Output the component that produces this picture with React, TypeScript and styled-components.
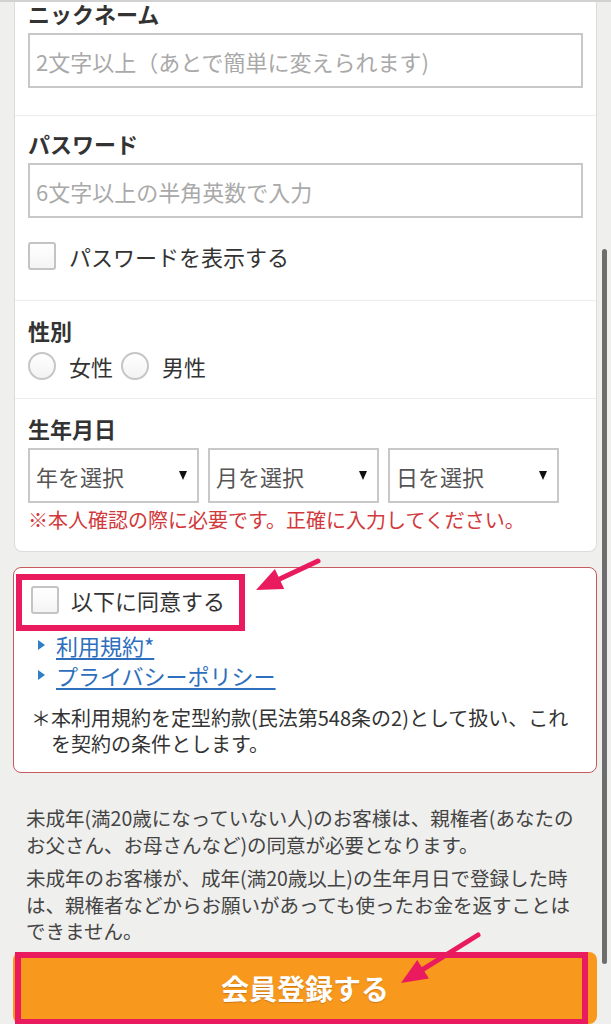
import React from "react";
import styled, { createGlobalStyle } from "styled-components";

const GlobalStyle = createGlobalStyle`
  html, body {
    margin: 0;
    padding: 0;
    overflow: hidden;
    background: #efefed;
  }
  body {
    font-family: "Noto Sans CJK JP", "Noto Sans", sans-serif;
    color: #333;
  }
  * { box-sizing: border-box; }
`;

const Page = styled.div`
  position: relative;
  width: 611px;
  height: 1024px;
  border-top: 2px solid #d2d2d2;
  overflow: hidden;
`;

const Card = styled.div`
  margin: 0 14px;
  background: #fff;
  border: 1px solid #dcdcdc;
  border-top: none;
  border-radius: 0 0 8px 8px;
`;

const Section = styled.div<{ $top: number; $bottom: number; $first?: boolean }>`
  padding: ${(p) => p.$top}px 13px ${(p) => p.$bottom}px;
  border-top: ${(p) => (p.$first ? "none" : "1px solid #ececec")};
`;

const Title = styled.div`
  font-size: 22px;
  font-weight: 700;
  line-height: 22px;
  color: #333;
  margin-bottom: 9px;
`;

const TextInput = styled.input`
  display: block;
  width: 100%;
  height: 55px;
  border: 2px solid #c8c8c8;
  border-radius: 0;
  padding: 0 6px;
  font-family: inherit;
  font-size: 22px;
  color: #333;
  background: #fff;
  outline: none;
  &::placeholder {
    color: #a9a9a9;
  }
`;

const CheckRow = styled.label<{ $mt: number }>`
  display: flex;
  align-items: center;
  gap: 13px;
  margin-top: ${(p) => p.$mt}px;
  height: 28px;
  font-size: 22px;
  line-height: 28px;
  color: #333;
`;

const CheckBox = styled.span`
  flex: none;
  width: 28px;
  height: 28px;
  border: 2px solid #c4c4c4;
  border-radius: 3px;
  background: linear-gradient(#ffffff, #f4f4f4);
`;

const RadioRow = styled.div`
  display: flex;
  align-items: center;
  margin-top: 11px;
  height: 28px;
`;

const RadioItem = styled.label`
  display: flex;
  align-items: center;
  gap: 13px;
  margin-right: 8px;
  font-size: 22px;
  line-height: 28px;
  color: #333;
`;

const RadioCircle = styled.span`
  flex: none;
  width: 28px;
  height: 28px;
  border-radius: 50%;
  border: 2px solid #c6c6c6;
  background: linear-gradient(#ffffff, #f3f3f3);
`;

const SelectRow = styled.div`
  display: flex;
  gap: 9px;
`;

const SelectBox = styled.div`
  width: 171px;
  height: 55px;
  border: 2px solid #c8c8c8;
  display: flex;
  align-items: center;
  justify-content: space-between;
  padding: 0 10px 0 6px;
  font-size: 22px;
  color: #555;
`;

const DownArrow = styled.span`
  width: 0;
  height: 0;
  border-left: 4px solid transparent;
  border-right: 4px solid transparent;
  border-top: 9px solid #111;
`;

const Notice = styled.div`
  margin-top: 4px;
  font-size: 20px;
  line-height: 26px;
  color: #d2393c;
`;

const AgreeBox = styled.div`
  position: relative;
  margin: 15px 14px 0 13px;
  background: #fff;
  border: 1.5px solid #c65a5c;
  border-radius: 8px;
  padding: 17px 16px 15px 17px;
`;

const AgreeRow = styled.label`
  display: flex;
  align-items: center;
  gap: 12px;
  height: 30px;
  font-size: 22px;
  color: #333;
`;

const LinkList = styled.ul`
  list-style: none;
  margin: 15px 0 0;
  padding: 0 0 0 7px;
`;

const LinkItem = styled.li`
  display: flex;
  align-items: center;
  gap: 11px;
  height: 30px;
  &::before {
    content: "";
    width: 0;
    height: 0;
    border-top: 5px solid transparent;
    border-bottom: 5px solid transparent;
    border-left: 7px solid #2f7fc6;
  }
`;

const Link = styled.a`
  font-size: 22px;
  line-height: 30px;
  color: #2d6fbd;
  text-decoration: underline;
  text-underline-offset: 3px;
  text-decoration-thickness: 1.5px;
`;

const Note = styled.p`
  margin: 15px 0 0;
  padding-left: 20px;
  text-indent: -20px;
  font-size: 20px;
  line-height: 26px;
  color: #333;
`;

const Info = styled.div`
  margin: 32px 14px 0 26px;
  display: flex;
  flex-direction: column;
  gap: 7px;
`;

const InfoText = styled.p`
  margin: 0;
  font-size: 19.5px;
  line-height: 26.5px;
  color: #444;
`;

const SubmitButton = styled.button`
  position: relative;
  display: block;
  width: 584px;
  height: 72px;
  margin: 7px 14px 0 13px;
  border: none;
  border-radius: 8px;
  background: #f8991e;
  color: #fff;
  font-family: inherit;
  font-size: 28px;
  font-weight: 700;
  text-shadow: 0 1px 1px rgba(120, 60, 0, 0.35);
`;

const Highlight = styled.span<{ $l: number; $t: number; $w: number; $h: number }>`
  position: absolute;
  left: ${(p) => p.$l}px;
  top: ${(p) => p.$t}px;
  width: ${(p) => p.$w}px;
  height: ${(p) => p.$h}px;
  border: 6px solid #ea1a5e;
  pointer-events: none;
`;

const ArrowLayer = styled.svg`
  position: absolute;
  left: 0;
  top: 0;
  pointer-events: none;
`;

const ScrollThumb = styled.div`
  position: absolute;
  left: 602px;
  top: 247px;
  width: 5px;
  height: 715px;
  border-radius: 3px;
  background: #6d6d6d;
`;

function Arrow({ x1, y1, x2, y2 }: { x1: number; y1: number; x2: number; y2: number }) {
  const dx = x2 - x1;
  const dy = y2 - y1;
  const len = Math.hypot(dx, dy);
  const ux = dx / len;
  const uy = dy / len;
  const headLen = 26;
  const headW = 11;
  const bx = x2 - ux * headLen;
  const by = y2 - uy * headLen;
  const px = -uy;
  const py = ux;
  const pts = `${x2},${y2} ${bx + px * headW},${by + py * headW} ${bx - px * headW},${by - py * headW}`;
  return (
    <g>
      <line
        x1={x1}
        y1={y1}
        x2={bx + ux * 4}
        y2={by + uy * 4}
        stroke="#ea1a5e"
        strokeWidth={5}
        strokeLinecap="round"
      />
      <polygon points={pts} fill="#ea1a5e" />
    </g>
  );
}

export default function App() {
  return (
    <>
      <GlobalStyle />
      <Page>
        <Card>
          <Section $top={0} $bottom={27} $first>
            <Title>ニックネーム</Title>
            <TextInput placeholder="2文字以上（あとで簡単に変えられます)" />
          </Section>
          <Section $top={16} $bottom={30}>
            <Title>パスワード</Title>
            <TextInput placeholder="6文字以上の半角英数で入力" />
            <CheckRow $mt={24}>
              <CheckBox />
              パスワードを表示する
            </CheckRow>
          </Section>
          <Section $top={18} $bottom={18}>
            <Title>性別</Title>
            <RadioRow>
              <RadioItem>
                <RadioCircle />
                女性
              </RadioItem>
              <RadioItem>
                <RadioCircle />
                男性
              </RadioItem>
            </RadioRow>
          </Section>
          <Section $top={18} $bottom={18}>
            <Title>生年月日</Title>
            <SelectRow>
              <SelectBox>
                年を選択
                <DownArrow />
              </SelectBox>
              <SelectBox>
                月を選択
                <DownArrow />
              </SelectBox>
              <SelectBox>
                日を選択
                <DownArrow />
              </SelectBox>
            </SelectRow>
            <Notice>※本人確認の際に必要です。正確に入力してください。</Notice>
          </Section>
        </Card>

        <AgreeBox>
          <AgreeRow>
            <CheckBox />
            以下に同意する
          </AgreeRow>
          <LinkList>
            <LinkItem>
              <Link href="#">利用規約*</Link>
            </LinkItem>
            <LinkItem>
              <Link href="#">プライバシーポリシー</Link>
            </LinkItem>
          </LinkList>
          <Note>
            ＊本利用規約を定型約款(民法第548条の2)として扱い、これ
            <br />
            を契約の条件とします。
          </Note>
          <Highlight $l={2} $t={6} $w={229} $h={57} />
        </AgreeBox>

        <Info>
          <InfoText>
            未成年(満20歳になっていない人)のお客様は、親権者(あなたの
            <br />
            お父さん、お母さんなど)の同意が必要となります。
          </InfoText>
          <InfoText>
            未成年のお客様が、成年(満20歳以上)の生年月日で登録した時
            <br />
            は、親権者などからお願いがあっても使ったお金を返すことは
            <br />
            できません。
          </InfoText>
        </Info>

        <SubmitButton type="button">
          会員登録する
          <Highlight $l={2} $t={0} $w={573} $h={73} />
        </SubmitButton>

        <ArrowLayer width={611} height={1024} viewBox="0 0 611 1024">
          <Arrow x1={318} y1={559} x2={256} y2={588} />
          <Arrow x1={478} y1={933} x2={401} y2={981} />
        </ArrowLayer>
        <ScrollThumb />
      </Page>
    </>
  );
}
